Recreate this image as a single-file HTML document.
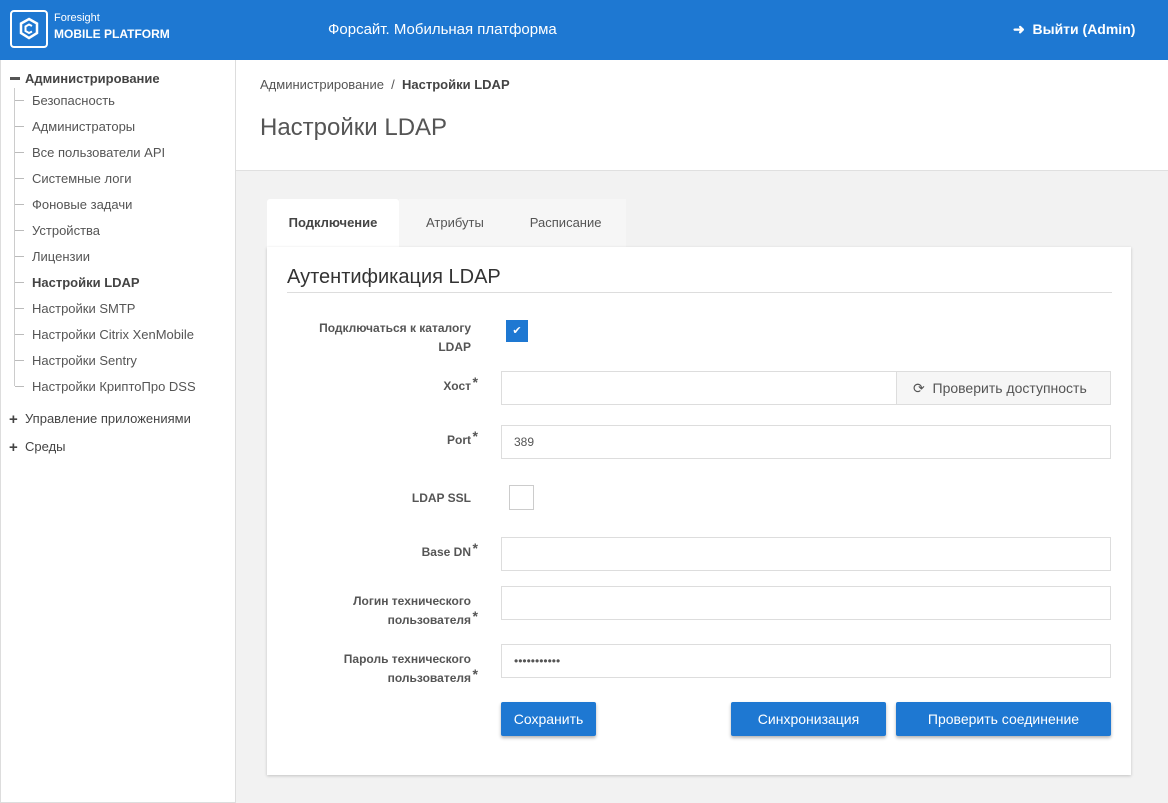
<!DOCTYPE html><html><head><meta charset="utf-8"><style>
*{box-sizing:border-box;margin:0;padding:0}
body{width:1168px;height:803px;overflow:hidden;font-family:"Liberation Sans",sans-serif;background:#f2f2f2;position:relative;color:#444}
.hdr{position:absolute;left:0;top:0;width:1168px;height:60px;background:#1e78d2;color:#fff}
.side{position:absolute;left:0;top:60px;width:236px;height:743px;background:#fff;border-right:1px solid #ddd;border-left:1px solid #ddd;border-bottom:1px solid #ddd;font-size:13px}
.top{position:absolute;left:236px;top:60px;right:0;height:111px;background:#fff;border-bottom:1px solid #e0e0e0}
.abs{position:absolute}
.it{position:absolute;left:31px;color:#555}
.tick{position:absolute;left:14px;width:9px;height:1px;background:#bbb}
.lbl{position:absolute;right:697px;text-align:right;font-size:12px;font-weight:bold;color:#555;line-height:19px}
.inp{position:absolute;left:501px;width:610px;height:34px;border:1px solid #ddd;background:#fff;font-size:12px;padding:0 12px;line-height:32px;color:#555}
.btn{position:absolute;top:702px;height:34px;background:#1e78d2;color:#fff;font-size:14px;text-align:center;line-height:34px;border-radius:2px;box-shadow:0 2px 3px rgba(0,0,0,.3)}
.st{color:#555;font-size:14px;position:absolute;top:-4px;right:-7px}
.lbl span{}
</style></head><body>
<div class="hdr">
<div class="abs" style="left:10px;top:10px;width:38px;height:38px;border:2px solid #fff;border-radius:4px"><svg width="34" height="34" viewBox="0 0 34 34"><path d="M17 7 L25 11.5 L25 21 L17 26 L9 21 L9 11.5 Z" fill="none" stroke="#fff" stroke-width="2.5"/><path d="M20 14 L17 12.5 L13.5 14.5 L13.5 19 L17 21 L20 19.5" fill="none" stroke="#fff" stroke-width="2"/></svg></div>
<div class="abs" style="left:54px;top:12px;font-size:11px">Foresight</div>
<div class="abs" style="left:54px;top:27px;font-size:12px;font-weight:bold">MOBILE PLATFORM</div>
<div class="abs" style="left:328px;top:21px;font-size:15px">Форсайт. Мобильная платформа</div>
<div class="abs" style="left:1013px;top:21px;font-size:14px;font-weight:bold">&#10140;&nbsp; Выйти (Admin)</div>
</div>
<div class="side">
<div class="abs" style="left:9px;top:17px;width:10px;height:3px;background:#555"></div>
<div class="abs" style="left:24px;top:11px;font-weight:bold;color:#444">Администрирование</div>
<div class="abs" style="left:13px;top:28px;width:1px;height:298px;background:#ccc"></div>
<div class="tick" style="top:40px"></div><div class="it" style="top:33px">Безопасность</div>
<div class="tick" style="top:66px"></div><div class="it" style="top:59px">Администраторы</div>
<div class="tick" style="top:92px"></div><div class="it" style="top:85px">Все пользователи API</div>
<div class="tick" style="top:118px"></div><div class="it" style="top:111px">Системные логи</div>
<div class="tick" style="top:144px"></div><div class="it" style="top:137px">Фоновые задачи</div>
<div class="tick" style="top:170px"></div><div class="it" style="top:163px">Устройства</div>
<div class="tick" style="top:196px"></div><div class="it" style="top:189px">Лицензии</div>
<div class="tick" style="top:222px"></div><div class="it" style="top:215px;font-weight:bold;color:#444">Настройки LDAP</div>
<div class="tick" style="top:248px"></div><div class="it" style="top:241px">Настройки SMTP</div>
<div class="tick" style="top:274px"></div><div class="it" style="top:267px">Настройки Citrix XenMobile</div>
<div class="tick" style="top:300px"></div><div class="it" style="top:293px">Настройки Sentry</div>
<div class="tick" style="top:326px"></div><div class="it" style="top:319px">Настройки КриптоПро DSS</div>
<div class="abs" style="left:8px;top:351px;font-weight:bold;font-size:15px">+</div><div class="abs" style="left:24px;top:351px">Управление приложениями</div>
<div class="abs" style="left:8px;top:379px;font-weight:bold;font-size:15px">+</div><div class="abs" style="left:24px;top:379px">Среды</div>
</div>
<div class="top">
<div class="abs" style="left:24px;top:17px;font-size:13px;color:#555">Администрирование &nbsp;/&nbsp; <b style="color:#444">Настройки LDAP</b></div>
<div class="abs" style="left:24px;top:54px;font-size:24px;color:#555">Настройки LDAP</div>
</div>
<div class="abs" style="left:267px;top:199px;width:132px;height:50px;background:#fff;border-radius:3px 3px 0 0;font-size:13px;font-weight:bold;text-align:center;line-height:47px">Подключение</div>
<div class="abs" style="left:399px;top:199px;width:227px;height:48px;background:#f6f6f6;font-size:13px;color:#555;line-height:47px"><span style="margin-left:27px">Атрибуты</span><span style="margin-left:46px">Расписание</span></div>
<div class="abs" style="left:267px;top:247px;width:864px;height:528px;background:#fff;box-shadow:0 1px 3px rgba(0,0,0,.2)"></div>
<div class="abs" style="left:287px;top:266px;font-size:20px;color:#333">Аутентификация LDAP</div>
<div class="abs" style="left:287px;top:292px;width:825px;height:1px;background:#ddd"></div>
<div class="lbl" style="top:319px">Подключаться к каталогу<br>LDAP</div>
<div class="abs" style="left:506px;top:320px;width:22px;height:22px;background:#1e78d2;color:#fff;font-size:11px;text-align:center;line-height:22px">✔</div>
<div class="lbl" style="top:377px">Хост<span class="st">*</span></div>
<div class="inp" style="top:371px"></div>
<div class="abs" style="left:896px;top:371px;width:215px;height:34px;border:1px solid #ddd;background:#f6f6f6;font-size:14px;color:#555;line-height:32px;padding-left:16px">⟳&nbsp; Проверить доступность</div>
<div class="lbl" style="top:431px">Port<span class="st">*</span></div>
<div class="inp" style="top:425px">389</div>
<div class="lbl" style="top:489px">LDAP SSL</div>
<div class="abs" style="left:509px;top:485px;width:25px;height:25px;border:1px solid #ccc;background:#fff"></div>
<div class="lbl" style="top:543px">Base DN<span class="st">*</span></div>
<div class="inp" style="top:537px"></div>
<div class="lbl" style="top:592px">Логин технического<br>пользователя<span class="st" style="top:15px">*</span></div>
<div class="inp" style="top:586px"></div>
<div class="lbl" style="top:650px">Пароль технического<br>пользователя<span class="st" style="top:15px">*</span></div>
<div class="inp" style="top:644px">•••••••••••</div>
<div class="btn" style="left:501px;width:95px">Сохранить</div>
<div class="btn" style="left:731px;width:155px">Синхронизация</div>
<div class="btn" style="left:896px;width:215px">Проверить соединение</div>
</body></html>
